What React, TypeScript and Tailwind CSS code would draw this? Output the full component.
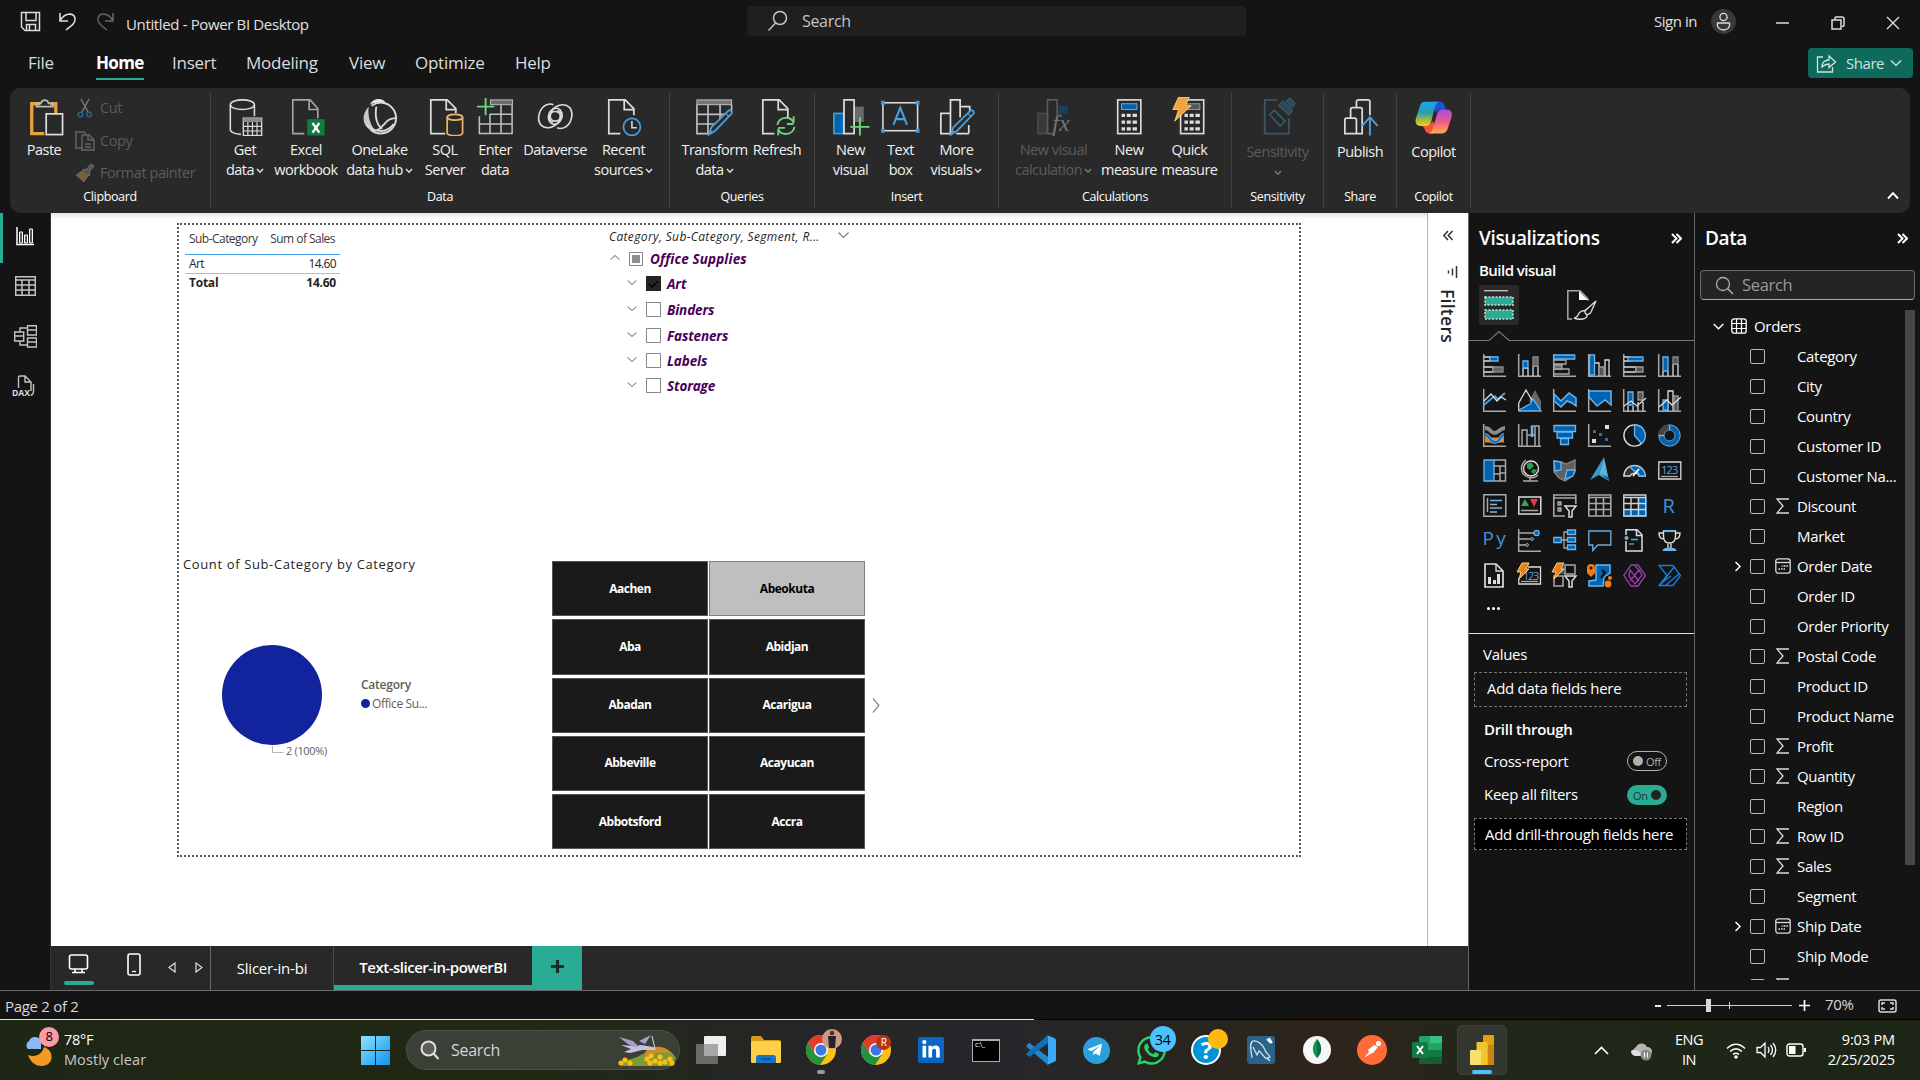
import React from "react";
import { FaLinkedinIn, FaTelegramPlane, FaWhatsapp } from "react-icons/fa";

type Kids = { children?: React.ReactNode };

const G = "#a8a8a8";
const W = "#dcdcdc";
const B = "#0063b1";
const L = "#6cb4ea";

function P({ d, s = W, f = "none", w = 1.3 }: { d: string; s?: string; f?: string; w?: number }) {
  return <path d={d} stroke={s} fill={f} strokeWidth={w} />;
}

function Svg({ s = 24, h, vb, children }: Kids & { s?: number; h?: number; vb?: string }) {
  return (
    <svg width={s} height={h ?? s} viewBox={vb ?? `0 0 ${s} ${h ?? s}`} fill="none" className="block shrink-0">
      {children}
    </svg>
  );
}

function Caret({ dim }: { dim?: boolean }) {
  return (
    <svg width="8" height="6" viewBox="0 0 8 6" fill="none" className="ml-[2px] inline-block align-middle">
      <path d="M1 1l3 3.2L7 1" stroke={dim ? "#777" : "#e0e0e0"} strokeWidth="1.5" />
    </svg>
  );
}

/* ---------- Ribbon ---------- */

const pencil = (
  <>
    <path d="M34.5 14.5c2-2 5 1 3.2 3L21 35l-6.5 4 2.500-7.500z" fill="#2b2b2b" stroke="#4a9edb" strokeWidth="1.8" />
    <path d="M14.500 39l1.500-5 3.500 3z" fill="#4a9edb" />
    <path d="M32 17l3.500 3.500" stroke="#4a9edb" strokeWidth="1.3" />
  </>
);

const icons: Record<string, React.ReactNode> = {
  paste: (
    <>
      <P d="M16 7H7v31h13M26 7h6v10" s="#e8a33d" w={3.4} />
      <P d="M12 10V6.500h4.500c1-4.500 7-4.500 8 0H29V10z" s="#b8b8b8" w={1.8} />
      <rect x="22" y="17.500" width="17" height="21.500" fill="#292929" stroke={W} strokeWidth="1.8" />
    </>
  ),
  getdata: (
    <>
      <ellipse cx="17" cy="8" rx="12.500" ry="5" stroke={W} strokeWidth="1.600" />
      <P d="M4.500 8v26c0 2.500 5 4.500 11 4.800M29.500 8v12" w={1.6} />
      <rect x="18" y="22" width="19" height="18" fill="#292929" stroke={W} strokeWidth="1.400" />
      <rect x="18" y="22" width="19" height="4" fill="#8a8a8a" />
      <P d="M18 30.500h19M18 35.300h19M22.700 26v14M27.500 26v14M32.200 26v14" w={1.2} />
    </>
  ),
  excel: (
    <>
      <P d="M18 38H6V3h18l8 9v10M23 3v10h9" s="#a6a6a6" w={1.700} />
      <rect x="21" y="23" width="18" height="17" fill="#107c41" />
      <P d="M26.500 27l7 10M33.500 27l-7 10" s="#fff" w={2.4} />
    </>
  ),
  onelake: (
    <>
      <path d="M10 8C14 0 25 0 28 8c-6-3-12-3-18 0z" fill="#e8e8e8" />
      <path d="M9 10C-1 20 4 35 17 36c-7-7-9-17-8-26z" fill="#c9c9c9" />
      <path d="M12 9a16 16 0 1 1-1 25" stroke={W} strokeWidth="1.900" />
      <P d="M17 10c-2 11 1 20 6 23M17 35c9-4 9-13 20-13M7 29c6 7 20 10 28-1" w={1.900} />
    </>
  ),
  sql: (
    <>
      <P d="M20 38H5V3h17l9 9v5M21 3v10h10" w={1.800} />
      <rect x="22" y="18" width="16" height="22" fill="#292929" />
      <ellipse cx="30" cy="21" rx="8" ry="3" stroke="#edb36b" strokeWidth="1.8" />
      <P d="M22 21v16c0 4 16 4 16 0V21" s="#edb36b" w={1.8} />
    </>
  ),
  enter: (
    <>
      <rect x="15" y="3" width="23" height="5" fill="#6d6d6d" stroke="#bbb" />
      <P d="M3.500 20v18h34V8M3.500 28h34M14 18h24M14.500 18v20M26 8v30M18 13" s="#c0c0c0" w={1.600} />
      <P d="M1 10h18M10 1v18" s="#6fd37f" w={2} />
    </>
  ),
  dataverse: (
    <>
      <ellipse cx="20" cy="20" rx="7" ry="8.500" transform="rotate(20 20 20)" stroke={W} strokeWidth="1.700" />
      <P d="M18 26c-6-1-5-11 2-11 4 0 6 3 5 7-2 9-14 13-20 7-5-7-1-18 6-21 3-1 5-1 7 0" w={1.700} />
      <P d="M22 14c6 1 5 11-2 11-4 0-6-3-5-7 2-9 14-13 20-7 5 7 1 18-6 21-3 1-5 1-7 0" w={1.700} />
    </>
  ),
  recent: (
    <>
      <P d="M17 38H5V3h17l9 9v7M21 3v10h10" w={1.800} />
      <circle cx="29" cy="31" r="8.800" fill="#292929" stroke="#4a9edb" strokeWidth="1.800" />
      <P d="M29 25v7h5" w={1.600} />
    </>
  ),
  transform: (
    <>
      <rect x="2" y="3" width="36" height="5" fill="#777" stroke="#c0c0c0" />
      <P d="M2 8v30h13M38 8v7M2 18h34M2 28h22M13.500 8v30M26 8v19" s="#c0c0c0" w={1.700} />
      {pencil}
    </>
  ),
  refresh: (
    <>
      <P d="M17 38H5V3h17l9 9v9M21 3v10h10" w={1.800} />
      <P d="M20 29c2-9 14-10 17-2v-7m0 8h-7M38 31c-2 9-14 10-17 2v7m0-8h7" s="#6fd37f" w={1.900} />
    </>
  ),
  newvisual: (
    <>
      <rect x="3" y="17" width="10" height="21" fill={B} stroke="#4a9edb" strokeWidth="1.600" />
      <rect x="13.500" y="3" width="10.500" height="35" stroke={W} strokeWidth="1.800" />
      <rect x="25" y="10" width="9" height="16" fill="#6b6b6b" />
      <P d="M20 31h20M30 21v19" s="#6fd37f" w={2} />
    </>
  ),
  textbox: (
    <>
      <rect x="2" y="6" width="36" height="29" stroke={W} strokeWidth="1.600" />
      <P d="M0 4h4v4H0zM36 4h4v4h-4zM0 33h4v4H0zM36 33h4v4h-4z" s="none" f="#3b9be8" />
      <P d="M13 29l7-18 7 18M15.500 23h9" s="#4a9edb" w={2.200} />
    </>
  ),
  morevisuals: (
    <>
      <P d="M16 38H4V17h10M14 38V3h10v18M25 10h9v6M33 38v-9M20 38h13" w={1.800} />
      {pencil}
    </>
  ),
  viscalc: (
    <>
      <rect x="4" y="17" width="10" height="21" fill="#3d3d3d" stroke="#555" strokeWidth="1.600" />
      <P d="M14 38V3h10v22M14 38h6" s="#666" w={1.700} />
      <rect x="25" y="9" width="10" height="9" fill="#1b4461" />
      <text x="19" y="35" fontSize="25" fontStyle="italic" fill="#888" fontFamily="Liberation Serif">fx</text>
    </>
  ),
  measure: (
    <>
      <rect x="8" y="3" width="24" height="35" stroke={W} strokeWidth="1.700" />
      <rect x="12" y="7" width="16" height="6" fill={B} stroke="#62b0e8" />
      <P d="M12 19h16M12 26h16M12 33h16" s={W} w={3.4} />
      <P d="M16.500 16v20M22.500 16v20" s="#292929" w={1.800} />
    </>
  ),
  quick: (
    <>
      <rect x="11" y="3" width="24" height="35" stroke={W} strokeWidth="1.700" />
      <rect x="18" y="7" width="13" height="6" fill="#555" stroke="#999" />
      <P d="M15 19h16M15 26h16M15 33h16" s={W} w={3.400} />
      <P d="M19.500 16v20M25.500 16v20" s="#292929" w={1.800} />
      <path d="M9 0h11l-4 9h6L5 25l4-12H3z" fill="#f2a43c" stroke="#ffd27a" />
    </>
  ),
  sensitivity: (
    <>
      <P d="M20 3H7v35h25V22" s="#3d627a" w={1.900} />
      <P d="M12 18l5-4 11 11-5 5z" s="#3d627a" w={1.800} />
      <path d="M21 9l5-5 10 10-4 5zM29 4l4-3 6 6-4 4z" fill="#2d5069" stroke="#4a718c" />
    </>
  ),
  publish: (
    <>
      <path d="M4 38V24c0-1.500 1-2 2-2h8c1 0 2 .5 2 2v14zM10 22v-9c0-1.500 1-2 2-2h8c1.500 0 2 1 2 2v25H16M16 11V5c0-1.500 1-2 2-2h10c1.500 0 2 1 2 2v14" stroke={W} strokeWidth="1.800" />
      <P d="M30 40V21m-8 9l8-9 8 9" s="#4a9edb" w={2} />
    </>
  ),
  copilot: (
    <>
      <defs>
        <linearGradient id="cpa" x1="0" y1="0" x2="0" y2="1"><stop stopColor="#1ba5f5" /><stop offset=".45" stopColor="#2b9fa8" /><stop offset="1" stopColor="#ffd000" /></linearGradient>
        <linearGradient id="cpb" x1="0" y1="0" x2="0" y2="1"><stop stopColor="#a34fe8" /><stop offset=".5" stopColor="#f0588a" /><stop offset="1" stopColor="#ffae4a" /></linearGradient>
      </defs>
      <path d="M17 5h10c3 0 4 2 5 4l1 4h-5c-3 0-4 1-5 4z" fill="#1f52d6" />
      <path d="M8 29h5c3 0 5-1 6-4l4 6-2 7h-3c-4 0-6-1-7-5z" fill="#f2523c" />
      <path d="M12 5h14c-3 1-4 4-5 8l-3 12c-1 3-2 5-5 5H7c-5 0-6-4-5-8l4-12c1-3 2-5 6-5z" fill="url(#cpa)" />
      <path d="M28 38H15c4-1 4-4 5-7l4-13c1-3 2-5 5-5h5c5 0 6 4 5 8l-4 12c-1 3-3 5-7 5z" fill="url(#cpb)" />
    </>
  ),
};

function RBtn({ icon, w, lines, caret, dim, low }: { icon: string; w: string; lines: string[]; caret?: boolean; dim?: boolean; low?: boolean }) {
  return (
    <div className={`flex flex-col items-center ${w} ${dim ? "text-[#5c5c5c]" : "text-[#f0f0f0]"}`}>
      <div className={dim ? "opacity-80" : ""}>
        <Svg s={39} vb="0 0 40.500 40.500">{icons[icon]}</Svg>
      </div>
      <div className={`text-center text-[14.5px] leading-[20px] tracking-[-0.035em] whitespace-nowrap ${low ? "mt-[6px]" : "mt-1"}`}>
        {lines.map((l, i) => (
          <div key={i} className="-mx-4 h-5">
            {l}
            {caret && i === lines.length - 1 && <Caret dim={dim} />}
          </div>
        ))}
      </div>
    </div>
  );
}

function Group({ w, label, children }: Kids & { w: string; label: string }) {
  return (
    <div className={`relative my-[5px] flex flex-col border-r border-[#404040] pt-[4px] ${w}`}>
      <div className="flex h-[89px] justify-center">{children}</div>
      <div className="h-[22px] text-center text-[12.5px] leading-[21px] tracking-[-0.03em] text-white">{label}</div>
    </div>
  );
}

function Ribbon() {
  return (
    <div className="ml-[10px] flex h-[125px] w-[1900px] rounded-[10px] bg-[#292929]">
      <Group w="w-[201px]" label="Clipboard">
        <div className="flex w-full">
          <RBtn icon="paste" w="w-[52px] ml-[8px]" lines={["Paste"]} />
          <div className="ml-[5px] flex flex-col text-[14.5px] tracking-[-0.03em] text-[#5c5c5c]">
            <div className="-mt-[5px] flex h-[32px] shrink-0 items-center gap-[5px]">
              <Svg s={20}><P d="M6 1l7 13M14 1L7 14" s="#777" w={1.500} /><circle cx="5.500" cy="16.500" r="2.300" stroke="#35607e" strokeWidth="1.500" /><circle cx="14" cy="16.500" r="2.300" stroke="#35607e" strokeWidth="1.500" /></Svg>
              Cut
            </div>
            <div className="flex h-[33px] shrink-0 items-center gap-[5px]">
              <Svg s={20}><P d="M7 17H1V1h8l2 2M7 4h7l5 5v10H7zM13 4v5h6M10 13h6M10 16h6" s="#666" w={1.400} /></Svg>
              Copy
            </div>
            <div className="flex h-[32px] shrink-0 items-center gap-[5px]">
              <Svg s={20}><path d="M11 7l5-6 3 2-5 6 1 3-3 1-5-5 2-2z" fill="#555" stroke="#777" /><path d="M7 8l6 5-4 6-8-7z" fill="#7a6037" stroke="#666" /></Svg>
              Format painter
            </div>
          </div>
        </div>
      </Group>
      <Group w="w-[459px]" label="Data">
        <RBtn icon="getdata" w="w-[54px]" lines={["Get", "data"]} caret />
        <RBtn icon="excel" w="w-[68px]" lines={["Excel", "workbook"]} />
        <RBtn icon="onelake" w="w-[79px]" lines={["OneLake", "data hub"]} caret />
        <RBtn icon="sql" w="w-[52px]" lines={["SQL", "Server"]} />
        <RBtn icon="enter" w="w-[48px]" lines={["Enter", "data"]} />
        <RBtn icon="dataverse" w="w-[72px]" lines={["Dataverse"]} />
        <RBtn icon="recent" w="w-[65px]" lines={["Recent", "sources"]} caret />
        <div className="w-[6px]" />
      </Group>
      <Group w="w-[145px]" label="Queries">
        <RBtn icon="transform" w="w-[70px]" lines={["Transform", "data"]} caret />
        <RBtn icon="refresh" w="w-[55px]" lines={["Refresh"]} />
      </Group>
      <Group w="w-[184px]" label="Insert">
        <RBtn icon="newvisual" w="w-[50px]" lines={["New", "visual"]} />
        <RBtn icon="textbox" w="w-[50px]" lines={["Text", "box"]} />
        <RBtn icon="morevisuals" w="w-[62px]" lines={["More", "visuals"]} caret />
      </Group>
      <Group w="w-[233px]" label="Calculations">
        <RBtn icon="viscalc" w="w-[92px]" lines={["New visual", "calculation"]} caret dim />
        <RBtn icon="measure" w="w-[59px]" lines={["New", "measure"]} />
        <RBtn icon="quick" w="w-[62px]" lines={["Quick", "measure"]} />
        <div className="w-[2px]" />
      </Group>
      <Group w="w-[92px]" label="Sensitivity">
        <RBtn icon="sensitivity" w="w-[90px]" lines={["Sensitivity", ""]} caret dim low />
      </Group>
      <Group w="w-[73px]" label="Share">
        <RBtn icon="publish" w="w-[70px]" lines={["Publish"]} low />
      </Group>
      <Group w="w-[74px]" label="Copilot">
        <RBtn icon="copilot" w="w-[70px]" lines={["Copilot"]} low />
      </Group>
      <div className="flex flex-1 items-end justify-end pr-[11px] pb-[13px]">
        <Svg s={12} h={9}><P d="M1 7.500L6 2.200l5 5.300" s="#fff" w={1.900} /></Svg>
      </div>
    </div>
  );
}

function TitleBar() {
  return (
    <div className="flex h-[42px] items-center text-[15px] tracking-[-0.03em] text-[#e0e0e0]">
      <div className="flex w-[747px] items-center">
        <div className="ml-[20px]">
          <Svg s={21}><path d="M1.500 1.500h18v18H5l-3.500-3.500zM6 1.500v8h10v-8M6.500 19.500v-6h9v6M9.500 14v5" stroke={W} strokeWidth="1.500" /></Svg>
        </div>
        <div className="ml-[17px]">
          <Svg s={20}><P d="M2 2v8h8M2 10C6 2 15 1 17 7c1 5-4 8-9 12" w={1.600} /></Svg>
        </div>
        <div className="ml-[18px]">
          <Svg s={20}><P d="M17 2v8H9M17 10C13 2 4 1 2 7c-1 5 4 8 9 12" s="#666" w={1.500} /></Svg>
        </div>
        <div className="mt-[7px] ml-[10px] tracking-[-0.024em]">Untitled - Power BI Desktop</div>
      </div>
      <div className="flex h-[30px] w-[499px] items-center rounded-[3px] bg-[#1f1f1f] pl-[20px] text-[16px] tracking-[-0.02em] text-[#c4c4c4]">
        <Svg s={22}><circle cx="13" cy="8" r="6.500" stroke="#c4c4c4" strokeWidth="1.500" /><P d="M8.500 13L1.500 20.500" s="#c4c4c4" w={1.500} /></Svg>
        <span className="ml-[13px]">Search</span>
      </div>
      <div className="ml-[408px] w-[44px] whitespace-nowrap">Sign in</div>
      <div className="ml-[13px] flex h-[25px] w-[25px] items-center justify-center rounded-full bg-[#383838]">
        <Svg s={19}><circle cx="9.500" cy="5" r="3.600" stroke={W} strokeWidth="1.300" /><P d="M3.500 11h12c1 5-3 7-6 7s-7-2-6-7z" w={1.300} /></Svg>
      </div>
      <div className="mt-[3px] ml-[40px]"><Svg s={14}><P d="M0 7h13" w={1.500} /></Svg></div>
      <div className="mt-[3px] ml-[41px]"><Svg s={14}><P d="M1 4h9v9H1zM4 3.500V2q0-1 1-1h6q2 0 2 2v6q0 1.500-2 1.500" w={1.500} /></Svg></div>
      <div className="mt-[3px] ml-[41px]"><Svg s={14}><P d="M1 1l12 12M13 1L1 13" w={1.400} /></Svg></div>
    </div>
  );
}

function Menu() {
  return (
    <div className="flex h-[46px] text-[17px] tracking-[-0.015em] text-[#dcdcdc]">
      <div className="mt-[9px] ml-[28px] w-[68px] leading-6">File</div>
      <div className="flex w-[76px] flex-col">
        <div className="mt-[9px] font-bold leading-6 tracking-[-0.04em] text-white">Home</div>
        <div className="mt-[3px] h-[2px] w-[48px] bg-[#2aac94]" />
      </div>
      <div className="mt-[9px] w-[74px] leading-6">Insert</div>
      <div className="mt-[9px] w-[103px] leading-6">Modeling</div>
      <div className="mt-[9px] w-[66px] leading-6">View</div>
      <div className="mt-[9px] w-[100px] leading-6">Optimize</div>
      <div className="mt-[9px] leading-6">Help</div>
      <div className="mt-[6px] mr-[7px] ml-auto flex h-[30px] w-[105px] items-center rounded-[4px] bg-[#0e6b5b] pl-[8px] text-[15px] tracking-[-0.03em] text-[#cfe3df]">
        <Svg s={21}><P d="M7 4H1.500v15h15v-5M6 14c0-5 3-7 7-7V3l6.500 6L13 14.500V11c-3 0-5 1-7 3z" s="#cfe3df" w={1.300} /></Svg>
        <span className="ml-[9px]">Share</span>
        <span className="ml-[6px]"><Svg s={12}><P d="M1 3.500l5 5 5-5" s="#cfe3df" /></Svg></span>
      </div>
    </div>
  );
}

/* ---------- Left rail ---------- */

function Rail() {
  return (
    <div className="flex w-[51px] flex-col border-r border-[#333] bg-[#141414]">
      <div className="flex h-[50px] items-center border-l-3 border-[#2aac94] pb-[2px] pl-[13px]">
        <Svg s={20}><P d="M1 0v17.500h17" s="#fff" w={1.500} /><path d="M3.500 16V5h3v11zM8.500 16V8h3v8zM13.500 16V2h3v14z" fill="#555" stroke="#fff" /></Svg>
      </div>
      <div className="-mt-[2px] flex h-[50px] items-center pl-[15px]">
        <Svg s={21} h={20}><P d="M.7.7h19.600v18.500H.7zM.7 4h19.600M.7 9h19.600M.7 14h19.600M7 4v15M14 4v15" s="#c4c4c4" w={1.500} /></Svg>
      </div>
      <div className="flex h-[50px] items-center pl-[14px]">
        <Svg s={23}><P d="M.7 7h9v9h-9zM.7 11h9M13.500.7h9V10h-9zM13.500 5h9M13.500 13h9v9h-9zM13.500 17h9M6 7V3h7M6 16v4h7" s="#c4c4c4" w={1.400} /></Svg>
      </div>
      <div className="flex h-[50px] items-center pl-[12px]">
        <Svg s={24} h={22}>
          <P d="M6.500 13V2.500q0-1.500 1.500-1.500h5l6 6v9M13 1v6h6M21.500 9v7q0 4-3 4" s="#c4c4c4" w={1.400} />
          <text x="0" y="21" fontSize="8.500" fontWeight="700" fill="#dcdcdc" fontFamily="Open Sans">DAX</text>
        </Svg>
      </div>
    </div>
  );
}

/* ---------- Report canvas ---------- */

const cities = ["Aachen", "Abeokuta", "Aba", "Abidjan", "Abadan", "Acarigua", "Abbeville", "Acayucan", "Abbotsford", "Accra"];

const slicerRows = [
  { name: "Art", on: true, h: "h-[25px]" },
  { name: "Binders", h: "h-[26px]" },
  { name: "Fasteners", h: "h-[26px]" },
  { name: "Labels", h: "h-[25px]" },
  { name: "Storage", h: "h-[25px]" },
];

function Canvas() {
  return (
    <div className="relative w-[1376px] bg-gradient-to-b from-[#e4e4e4] via-white via-[6px] to-white">
      <div className="absolute top-[10px] left-[126px] h-[634px] w-[1124px] border-2 border-dotted border-[#555]" />

      <div className="absolute top-[15px] left-[134px] w-[155px] text-[12px] tracking-[-0.02em] text-[#252423]">
        <div className="flex h-[27px] justify-between border-b border-[#41a5ee] pt-[2px] pr-[5px] pl-1 leading-[18px] tracking-[-0.045em] text-[#3a3938]">
          <span>Sub-Category</span><span>Sum of Sales</span>
        </div>
        <div className="flex h-[19px] justify-between border-b border-[#8cc6f3] pr-[4px] pl-1 leading-[18px] tracking-[-0.05em]">
          <span>Art</span><span>14.60</span>
        </div>
        <div className="flex h-[19px] justify-between pr-[4px] pl-1 font-bold leading-[18px]">
          <span>Total</span><span>14.60</span>
        </div>
      </div>

      <div className="absolute top-[14px] left-[558px] w-[260px]">
        <div className="flex h-[19px] items-center justify-between pr-[20px] text-[12px] italic tracking-[0.03em] whitespace-nowrap text-[#252423]">
          <span>Category, Sub-Category, Segment, R...</span>
          <span className="-mt-[4px]"><Svg s={11}><P d="M.5 3.500l5 5 5-5" s="#777" w={1.100} /></Svg></span>
        </div>
        <div className="flex h-[26px] items-center text-[13.5px] font-bold italic tracking-[0.01em] whitespace-nowrap text-[#4a0058]">
          <span className="-mt-[3px] ml-px"><Svg s={10}><P d="M.5 6.500L5 2.500l4.500 4" s="#999" w={1.100} /></Svg></span>
          <div className="mr-[7px] ml-[9px] flex h-[14px] w-[14px] items-center justify-center border border-[#8a8a8a]">
            <div className="h-2 w-2 bg-[#8f8f8f]" />
          </div>
          Office Supplies
        </div>
        {slicerRows.map((r) => (
          <div key={r.name} className={`flex items-center pl-[18px] text-[13.5px] font-bold italic tracking-[-0.01em] text-[#4a0058] ${r.h}`}>
            <span className="-mt-[3px]"><Svg s={10}><P d="M.5 2.500l4.500 4 4.500-4" s="#999" w={1.100} /></Svg></span>
            <div className={`-mt-[2px] mr-[6px] ml-[9px] flex h-[15px] w-[15px] items-center justify-center border ${r.on ? "border-[#252423] bg-[#252423]" : "border-[#8a8a8a]"}`}>
              {r.on && <Svg s={11}><P d="M1 6l3 3 6-6" s="#000" w={1.300} /></Svg>}
            </div>
            {r.name}
          </div>
        ))}
      </div>

      <div className="absolute top-[341px] left-[132px] text-[13px] leading-5 tracking-[0.048em] whitespace-nowrap text-[#252423]">
        Count of Sub-Category by Category
      </div>
      <div className="absolute top-[432px] left-[171px]">
        <Svg s={110} h={120}>
          <circle cx="50" cy="50" r="50" fill="#12239e" />
          <P d="M50.500 101v6.500h11" s="#b5b5b5" w={1} />
        </Svg>
      </div>
      <div className="absolute top-[530px] left-[235px] text-[11px] leading-4 tracking-[-0.03em] text-[#605e5c]">2 (100%)</div>
      <div className="absolute top-[463px] left-[310px] text-[12px] tracking-[-0.03em] text-[#605e5c]">
        <div className="h-[19px] font-semibold leading-[18px] tracking-[-0.02em]">Category</div>
        <div className="flex h-[18px] items-center gap-[2px]">
          <div className="-mt-[2px] h-[9px] w-[9px] rounded-full bg-[#12239e]" />
          Office Su...
        </div>
      </div>

      <div className="absolute top-[348px] left-[501px] grid w-[313px] grid-cols-2 gap-x-px gap-y-[3px]">
        {cities.map((c) => (
          <div
            key={c}
            className={`flex h-[55.250px] items-center justify-center border text-[12px] font-bold tracking-[-0.04em] ${c === "Abeokuta" ? "border-[#808080] bg-[#bfbfbf] text-black" : "border-[#555] bg-[#1a1a1a] text-white"}`}
          >
            {c}
          </div>
        ))}
      </div>
      <div className="absolute top-[485px] left-[821px]">
        <Svg s={9} h={15}><P d="M1 .5l6 7-6 7" s="#888" w={1.200} /></Svg>
      </div>
    </div>
  );
}

function PageTabs() {
  return (
    <div className="flex h-[44px] bg-[#282828] text-[15px] tracking-[-0.015em] text-white">
      <div className="flex w-[160px] border-r border-[#6a6a6a] pt-[7px]">
        <div className="ml-[13px] flex w-[30px] flex-col items-center">
          <div className="-ml-[2px]"><Svg s={21}><rect x="1.500" y="2" width="18" height="14" rx="2" stroke="#fff" strokeWidth="1.600" /><P d="M7 16v3m7-3v3M4 19.500h13" s="#fff" w={1.600} /></Svg></div>
          <div className="mt-[7px] h-[4px] w-[30px] rounded-sm bg-[#2aac94]" />
        </div>
        <div className="ml-[33px]"><Svg s={14} h={23}><rect x="1" y="1" width="12" height="21" rx="2" stroke="#fff" strokeWidth="1.600" /><P d="M5 18.500h4" s="#fff" /></Svg></div>
        <div className="mt-[9px] ml-[27px]"><Svg s={8} h={11}><P d="M7 1v9L1 5.500z" w={1.200} /></Svg></div>
        <div className="mt-[9px] ml-[19px]"><Svg s={8} h={11}><P d="M1 1v9l6-4.500z" w={1.200} /></Svg></div>
      </div>
      <div className="flex w-[123px] items-center justify-center border-r border-[#4a4a4a]">Slicer-in-bi</div>
      <div className="flex w-[199px] items-center justify-center border-r border-b-5 border-[#2aac94] pt-[4px] font-semibold tracking-[-0.032em]">Text-slicer-in-powerBI</div>
      <div className="flex w-[49px] items-center justify-center bg-[#2aac94] pb-1">
        <Svg s={13}><P d="M6.500 0v13M0 6.500h13" s="#1d2a28" w={3.2} /></Svg>
      </div>
    </div>
  );
}

function Dbl({ dir, c = "#fff" }: { dir: "l" | "r"; c?: string }) {
  return (
    <Svg s={11}>
      <P d={dir === "r" ? "M1 1l4.500 4.500L1 10M5.500 1L10 5.500 5.500 10" : "M5 1L.8 5.500 5 10M9.500 1L5.300 5.500 9.500 10"} s={c} w={dir === "r" ? 2 : 1.500} />
    </Svg>
  );
}

function Filters() {
  return (
    <div className="flex w-[41px] flex-col items-center border-l border-[#b5b5b5] bg-white pt-[17px]">
      <Dbl dir="l" c="#333" />
      <div className="mt-[25px] ml-[7px]"><Svg s={12}><P d="M10.500 0v12M6.500 2.500v7M2.500 4.500v3" s="#333" w={1.500} /></Svg></div>
      <div className="mt-[11px] text-[17.5px] font-semibold leading-6 tracking-[0.015em] text-[#252423] [writing-mode:vertical-rl]">Filters</div>
    </div>
  );
}

/* ---------- Visualizations ---------- */

const axis = <P d="M.7 0v22.300H23" s={G} w={1.500} />;
const bolt = <path d="M4-1h7L8 5h3L1 15l2-7H-1z" fill="#e8801a" stroke="#ffcf80" strokeWidth="1" />;

const visuals: React.ReactNode[] = [
  <>{axis}<P d="M1 3h6v4H1M1 13h9v5H1" s={W} /><P d="M7 3h8v4H7z" s={L} f={B} /><P d="M10 13h10v5H10z" s="#888" f="#666" /></>,
  <>{axis}<P d="M5 14v8M10 14v8M15 12v10M20 12v10M5 14h5M15 12h5" s={W} /><P d="M5 7h5v7H5z" s={L} f={B} /><P d="M15 3h5v9h-5z" s="#888" f="#666" /></>,
  <>{axis}<P d="M1 6h12v4H1M1 15h15v5H1" s={G} /><P d="M1 11h8v4H1z" s={G} f="#666" /><P d="M.7 1h21v4H.7z" s={L} f={B} /></>,
  <>{axis}<P d="M7 9h4v13M17 22V6h4v16" s={W} /><P d="M11 13h5v9h-5z" s="#999" f="#555" /><P d="M1.500 1h5v20h-5z" s={L} f={B} /></>,
  <>{axis}<P d="M1 3h5v4H1M1 13h12v5H1" s={W} /><P d="M5 3h15v4H5z" s={L} f={B} /><P d="M13 13h7v5h-7z" s="#999" f="#555" /></>,
  <>{axis}<P d="M5 17v5M10 17v5M15 10v12M20 10v12M15 10h5" s={W} /><P d="M5 3h5v14H5z" s={L} f={B} /><P d="M15 3h5v7h-5z" s="#888" f="#555" /></>,

  <>{axis}<P d="M1 16L8 10l4-3 3 3 7-6" s="#4ba3e3" w={1.700} /><P d="M1 12l7-7 6 7 4-4 5 3" s={W} w={1.400} /></>,
  <><path d="M11 12l6-11 6 11v10z" fill="#666" /><P d="M.7 14L8 1l7 12M.7 14v8" s={W} /><P d="M1 21l11-6 3-5 8 12H1z" s={L} f={B} /></>,
  <>{axis}<P d="M1 5l7 7 8-8 7 5v8l-4-3-5-2-6 6-7-6z" s={L} f={B} w={1.500} /></>,
  <>{axis}<P d="M1 2h22v14l-6-5-8 6-8-9z" s={L} f={B} w={1.500} /></>,
  <>{axis}<P d="M15 3h5v8h-5z" s="#999" f="#555" /><P d="M5 3h5v13H5z" s={L} f={B} /><P d="M5 22v-5M10 22v-5M15 22v-9M20 22v-9M1 17l7-5 6 5 9-8" s={W} /></>,
  <>{axis}<P d="M10 22V2h5v20" s={W} /><P d="M16 7h4v15h-4z" s="#999" f="#555" /><P d="M5 11h5v10H5z" s={L} f={B} /><P d="M1 18l8-7 5 5 9-8" s={W} /></>,

  <>{axis}<P d="M2 16h19" s="#ef7d16" w={5} /><P d="M2 12.500h4M17 12.500h4" s="#ffb46b" w={1.500} /><P d="M2 4c6 0 5 5 9.500 5S17 4 22 4" s="#8a8a8a" w={4} /><P d="M2 11c5 0 4 7 10 7s5-7 9-7" s={L} w={3.500} /><P d="M2 11c5 0 4 7 10 7s5-7 9-7" s={B} w={1.500} /></>,
  <>{axis}<P d="M4 22V6h5v5h5V2h7v20M9 11v11M14 11h3M17 2v20" s={G} w={1.500} /><P d="M14 2v11" s={L} w={2.600} /></>,
  <><P d="M1 1.500h21.500v6H1zM4 8h15.500v6H4zM7.500 14.500h8v6h-8z" s={L} f={B} /></>,
  <>{axis}<P d="M5 6h3v3H5zM11 9h3v3h-3zM17 14h3v3h-3z" s="none" f="#1a73c2" /><P d="M17 1h4v4h-4zM4 15h4v4H4z" s="none" f={W} /></>,
  <><circle cx="11.500" cy="11.500" r="10.600" stroke={W} strokeWidth="1.400" /><P d="M11.500 1a10.500 10.500 0 0 1 7 18.500l-7-8z" s={L} f={B} /></>,
  <><circle cx="11.500" cy="11.500" r="8.300" stroke={B} strokeWidth="4.400" /><circle cx="11.500" cy="11.500" r="10.700" stroke={L} /><circle cx="11.500" cy="11.500" r="5.500" stroke={L} /><P d="M3 11.500a8.500 8.500 0 0 1 8.500-8.500" s="#444" w={5} /><P d="M.8 11.500h5.200M11.500 1v5" s={G} /></>,

  <><P d="M1 1h10v21H1z" s={L} f={B} /><P d="M11 1h11.500v21H11M11 7h11M17 7v15M11 15h6M17 14h6" s={G} w={1.500} /></>,
  <><circle cx="13" cy="9.500" r="7.500" stroke={W} fill="#111" strokeWidth="1.400" /><path d="M9 5l4-2 3 4-4 4-3-2zM15 10l4 1-3 4-3-2z" fill="#2d9a4a" /><P d="M8 1C2 5 2 14 8 17c4 3 9 2 12-1M12 18v4M5 22h15" s={G} w={1.500} /></>,
  <><P d="M1 2l7 1 5 2 9-4v12l-4 5-6 4-6-3-5-6z" s="#888" f="#606060" /><P d="M1 2l7 1v8l-6 1zM14 11h8l-2 6-8 3z" s={L} f={B} /></>,
  <><path d="M16-2L2 21l9-5z" fill="#3a9bc8" /><path d="M16-2l5 24-10-6z" fill="#57b6dc" /><path d="M13 15l7 3 1 4z" fill="#0063b1" /></>,
  <><P d="M.8 17a10.700 10.700 0 0 1 21.400 0h-6a5 5 0 0 0-9 0z" s={W} f="#333" /><P d="M7 8a10.700 10.700 0 0 1 15.200 9h-6a5 5 0 0 0-5-5z" s={L} f={B} /><P d="M10 17l6-7" s="#fff" w={1.800} /></>,
  <><P d="M.8 3h22v17h-22z" s={W} /><text x="3" y="15" fontSize="11.500" fill="#4ba3e3" fontFamily="Open Sans" textLength="17">123</text><P d="M3 17.500h17" s={G} /></>,

  <><P d="M.8.8h22v21.500h-22z" s={G} w={1.500} /><P d="M4.500 4v14M7 10.500h7M7 18h7" s={G} w={1.500} /><P d="M7 6.500h12M7 14h12" s={L} w={1.700} /></>,
  <><P d="M.8 3h22v17h-22z" s={W} w={1.500} /><path d="M3 12l4-7 4 7z" fill="#3aa655" /><path d="M12 5h8l-4 8z" fill="#e33b3b" /><P d="M3 16.500h17" s={G} w={1.500} /></>,
  <><P d="M12 22H.8V1h22v9M.8 4h22" s={G} w={1.600} /><P d="M5 8h3v3H5zM5 14h3v3H5z" s={G} f="#777" /><P d="M12 12h11l-4 5v6h-3v-6z" s={W} f="#141414" w={1.500} /></>,
  <><P d="M.8 1h22v21h-22zM.8 3.500h22M.8 9.500h22M.8 15.500h22M8 4v18M15.500 4v18" s={G} w={1.600} /></>,
  <><P d="M15 4h8v18H1v-6h14z" s={B} f={B} /><P d="M.8 1h22v21h-22zM.8 3.500h22M.8 9.500h22M.8 15.500h22M8 4v18M15.500 4v18" s="#c9d6e0" w={1.400} /></>,
  <><text x="4.500" y="19" fontSize="20" fill="#3a96dd" fontFamily="Open Sans">R</text></>,

  <><text x="-.5" y="16" fontSize="19" fill="#3a96dd" fontFamily="Open Sans" textLength="23">Py</text></>,
  <>{axis}<P d="M1 4h15M1 10h11M1 16h7" s={G} w={1.400} /><circle cx="18.500" cy="4" r="2.600" fill={B} stroke={L} strokeWidth="1.300" /><circle cx="14" cy="10" r="1.400" stroke={G} /><circle cx="9" cy="16" r="1.400" stroke={G} /></>,
  <><P d="M8 11h3M15 3h-4v16h4M11 11h4" s={G} /><P d="M.8 8.500h7.500v5H.8zM14.500 1h8v4.500h-8zM14.500 8.500h8V13h-8zM14.500 16h8v4.500h-8z" s={L} f={B} /></>,
  <><P d="M.8 2h22v14h-13l-5 5.500V16H.8z" s="#69a9d8" w={1.400} /></>,
  <><P d="M3 6V.8h11l5 5V22H3V12M13.500 1v5.500H19" s={W} w={1.500} /><circle cx="3.500" cy="9" r="2" fill={L} /><P d="M8 10.500h7M13 15" s="#4ba3e3" w={1.600} /><P d="M6 15h5" s="#4ba3e3" /></>,
  <><P d="M5.500 2h12v5c0 5-3 7-6 7s-6-2-6-7zM5.500 4H1c0 5 3 6 5 6M17.500 4H22c0 5-3 6-5 6M10 14v5M13 14v5" s={W} w={1.400} /><P d="M6 2h11M6 21c1-2 10-2 11 0z" s={L} f={B} w={2} /></>,

  <><P d="M2 0h11l7 7v16H2z" s={W} w={1.700} /><P d="M13 0v7h7" s={W} /><path d="M5 13h3v7H5zM10 16h3v4h-3zM14 10h3v10h-3z" fill={W} /></>,
  <><P d="M10 3h12.500v17H.8v-6" s={W} /><text x="5" y="16" fontSize="11" fill="#4ba3e3" fontFamily="Open Sans" textLength="16">123</text><P d="M3 17.500h17" s={G} />{bolt}</>,
  <><P d="M12 1h10v9H12zM1 12h9v10H1z" s={G} w={1.500} /><P d="M12 12h11l-4 5v6h-3v-6z" s={W} f="#141414" w={1.500} /><path d="M7 2h4v8H7z" fill={B} />{bolt}</>,
  <><P d="M8 1h14v8l-6 4-1 9H1v-5l7-1z" s={L} f={B} w={1.500} /><P d="M14 6l3 3-4 5" s="#141414" w={2.500} /><path d="M-1 4a4 4 0 0 1 8 0v5l-4 4-4-4z" fill="#ef7d16" /><circle cx="3" cy="4" r="1.500" fill="#141414" /><circle cx="20" cy="20" r="3.400" fill="#ef7d16" /><circle cx="22" cy="14" r="2" fill="#ef7d16" /></>,
  <><P d="M8 1h7l7.500 10.500L15 22H8L.8 11.500zM7 6l4.500 5.500L16 6l3 5-7 9-6-8zM16 6l-4-4M7 17l4.500-5.500L16 17" s="#9b3fae" w={1.300} /></>,
  <><P d="M1 1.500h14l7.500 10L15 21.500H1l8-10zM8 21l13-11M3 20L16 3M1 21L13 12" s="#1a7fe0" w={1.300} /></>,
];

function Toggle({ on }: { on?: boolean }) {
  return on ? (
    <div className="flex h-5 w-10 items-center justify-between rounded-full bg-[#2aac94] pr-[6px] pl-[6px] text-[11px] leading-none text-[#1b3a35]">
      On<div className="h-[10px] w-[10px] rounded-full bg-[#252423]" />
    </div>
  ) : (
    <div className="flex h-5 w-10 items-center justify-between rounded-full border border-[#b0b0b0] pr-[5px] pl-[5px] text-[11px] leading-none text-[#b0b0b0]">
      <div className="h-[10px] w-[10px] rounded-full bg-[#b0b0b0]" />Off
    </div>
  );
}

function Visualizations() {
  return (
    <div className="flex w-[227px] flex-col border-x border-[#666] bg-[#141414] text-[15px] tracking-[-0.02em] text-white">
      <div className="flex h-[50px] items-center justify-between pr-[12px] pl-[10px]">
        <span className="text-[19px] font-semibold tracking-[-0.02em]">Visualizations</span>
        <Dbl dir="r" />
      </div>
      <div className="h-[22px] pl-[10px] text-[15px] font-semibold leading-[15px] tracking-[-0.035em]">Build visual</div>
      <div className="flex pl-[10px]">
        <div className="flex h-10 w-10 items-center justify-center rounded-[2px] bg-[#292929]">
          <Svg s={30}>
            <P d="M0 .7h24" s="#c8c8c8" w={1.300} />
            <rect x="1" y="7" width="28" height="8" fill="#2aac94" stroke="#d8d8d8" strokeWidth="1.500" strokeDasharray="2 1.500" />
            <rect x="1" y="20" width="28" height="9" fill="#2aac94" stroke="#d8d8d8" strokeWidth="1.500" strokeDasharray="2 1.500" />
          </Svg>
        </div>
        <div className="mt-[5px] ml-[48px]">
          <Svg s={30}>
            <P d="M5 29H.8V.8H13l8 8v2M13 1" s={G} w={1.500} />
            <path d="M12 1l9 9h-9z" fill="#fff" />
            <P d="M29 11l-9 8c-2 1-3 3-1 5 2 1 4 0 5-2zM19 21c-4-1-7 1-8 4-1 2-2 3-4 3 5 2 14 2 13-4" s={W} w={1.400} />
          </Svg>
        </div>
      </div>
      <div className="mt-[6px]">
        <Svg s={225} h={11}><P d="M0 9.500h20l10-9 10 9h185" s="#777" w={1.200} /></Svg>
      </div>
      <div className="mt-[12px] grid w-[224px] grid-cols-6 gap-y-[12px] pl-[14px]">
        {visuals.map((v, i) => (
          <div key={i} className="h-[23px] w-[23px]"><svg width="23" height="23" viewBox="0 0 23 23" fill="none" className="block overflow-visible">{v}</svg></div>
        ))}
      </div>
      <div className="mt-[20px] flex h-[3px] gap-[2px] pl-[18px]">
        <div className="h-[3px] w-[3px] rounded-full bg-white" />
        <div className="h-[3px] w-[3px] rounded-full bg-white" />
        <div className="h-[3px] w-[3px] rounded-full bg-white" />
      </div>
      <div className="mt-[23px] h-px bg-[#e0e0e0]" />
      <div className="mt-[10px] h-[28px] pl-[14px] leading-5">Values</div>
      <div className="mr-[7px] ml-[5px] flex h-[35px] items-center border border-dashed border-[#777] pb-[2px] pl-[12px]">Add data fields here</div>
      <div className="mt-[12px] h-[20px] pl-[15px] font-semibold leading-5">Drill through</div>
      <div className="mt-[6px] flex h-[32px] items-center justify-between pr-[27px] pl-[15px]">Cross-report<Toggle /></div>
      <div className="mt-[2px] flex h-[32px] items-center justify-between pr-[27px] pl-[15px]"><span className="-mt-px">Keep all filters</span><Toggle on /></div>
      <div className="mt-[7px] mr-[7px] ml-[5px] flex h-[32px] items-center border border-dashed border-[#777] bg-black pl-[10px] whitespace-nowrap">Add drill-through fields here</div>
    </div>
  );
}

/* ---------- Data pane ---------- */

type Field = { n: string; t?: "sum" | "date" };
const fields: Field[] = [
  { n: "Category" }, { n: "City" }, { n: "Country" }, { n: "Customer ID" }, { n: "Customer Na..." },
  { n: "Discount", t: "sum" }, { n: "Market" }, { n: "Order Date", t: "date" }, { n: "Order ID" }, { n: "Order Priority" },
  { n: "Postal Code", t: "sum" }, { n: "Product ID" }, { n: "Product Name" }, { n: "Profit", t: "sum" }, { n: "Quantity", t: "sum" },
  { n: "Region" }, { n: "Row ID", t: "sum" }, { n: "Sales", t: "sum" }, { n: "Segment" }, { n: "Ship Date", t: "date" },
  { n: "Ship Mode" }, { n: "", t: "sum" },
];

function DataPane() {
  return (
    <div className="flex w-[225px] flex-col bg-[#141414] text-[15px] tracking-[-0.022em] text-white">
      <div className="flex h-[50px] items-center justify-between pr-[12px] pl-[10px]">
        <span className="text-[19px] font-semibold tracking-[-0.02em]">Data</span>
        <Dbl dir="r" />
      </div>
      <div className="mt-[7px] ml-[5px] flex h-[30px] w-[215px] items-center rounded-[4px] border border-[#6a6a6a] border-b-[#a8a8a8] bg-[#242424] pl-[14px] text-[16px] text-[#9a9a9a]">
        <Svg s={19}><circle cx="8" cy="8" r="6.500" stroke="#b0b0b0" strokeWidth="1.300" /><P d="M12.500 12.500l5.500 5.500" s="#b0b0b0" w={1.400} /></Svg>
        <span className="ml-[8px] text-[16.5px]">Search</span>
      </div>
      <div className="mt-[10px] flex h-[670px]">
        <div className="w-[210px] overflow-hidden">
          <div className="mt-px flex h-[30px] items-center pl-[18px]">
            <Svg s={11}><P d="M.7 3l4.800 4.800L10.300 3" s="#fff" w={1.400} /></Svg>
            <span className="ml-[7px]"><Svg s={16}><rect x=".8" y=".8" width="14.400" height="14.400" rx="2.500" stroke="#fff" strokeWidth="1.300" /><P d="M5.500 1v14M10.500 1v14M1 5.500h14M1 10.500h14" s="#fff" w={1.200} /></Svg></span>
            <span className="ml-[7px]">Orders</span>
          </div>
          {fields.map((f, i) => (
            <div key={i} className="flex h-[30px] items-center whitespace-nowrap">
              <div className="flex w-[55px] justify-end pr-[8px]">
                {f.t === "date" && <Svg s={8} h={11}><P d="M1.500 1l4.500 4.500L1.500 10" s="#fff" w={1.500} /></Svg>}
              </div>
              <div className="h-[15px] w-[15px] rounded-[2px] border border-[#b8b8b8]" />
              <div className="ml-[10px] w-[22px]">
                {f.t === "sum" && <Svg s={15} h={16}><P d="M14 1H2l6 7-6 7h12" s={W} w={1.300} /></Svg>}
                {f.t === "date" && (
                  <Svg s={16}><rect x=".8" y=".8" width="14.400" height="14.400" rx="2.500" stroke={W} strokeWidth="1.300" /><P d="M1 4.500h14" /><P d="M6.500 8h6.500M3.500 11h6.500" w={1.600} /><path d="M8 7v5M11 7v2M5.500 10v2" stroke="#141414" /></Svg>
                )}
              </div>
              {f.n}
            </div>
          ))}
        </div>
        <div className="h-[555px] w-[10px] bg-[#474747]" />
      </div>
    </div>
  );
}

function Status() {
  return (
    <div className="flex h-[30px] items-center border-t border-[#6a6a6a] bg-[#141414] text-[15px] tracking-[-0.02em] text-[#d8d8d8]">
      <span className="mt-[2px] ml-[5px] w-[1649px]">Page 2 of 2</span>
      <Svg s={8}><P d="M1 4h6" s="#fff" w={1.800} /></Svg>
      <div className="ml-[5px] flex w-[125px] items-center">
        <div className="h-px w-[39px] bg-[#d0d0d0]" />
        <div className="h-[13px] w-[5px] bg-[#d8d8d8]" />
        <div className="h-px w-[18px] bg-[#d0d0d0]" />
        <div className="h-[7px] w-px bg-[#d0d0d0]" />
        <div className="h-px flex-1 bg-[#d0d0d0]" />
      </div>
      <span className="ml-[7px]"><Svg s={11}><P d="M5.500 0v11M0 5.500h11" s="#fff" w={1.700} /></Svg></span>
      <span className="-mt-[2px] ml-[15px] w-[53px]">70%</span>
      <Svg s={19} h={14}><rect x="1" y="1" width="17" height="12" rx="2" stroke="#d8d8d8" strokeWidth="1.500" /><P d="M7 4H4v2m0 2v2h3M12 4h3v2m0 2v2h-3" w={1.500} /></Svg>
    </div>
  );
}

/* ---------- Taskbar ---------- */

function Chrome() {
  return (
    <svg width="30" height="30" viewBox="0 0 30 30">
      <circle cx="15" cy="15" r="15" fill="#fbc116" />
      <path d="M2 7.500A15 15 0 0 1 28 7.500L15 8.500 8.500 18.700z" fill="#e33b2e" />
      <path d="M2 7.500A15 15 0 0 0 14 30L21.500 18.700 15 22 8.500 18.700z" fill="#229342" />
      <circle cx="15" cy="15" r="7" fill="#fff" />
      <circle cx="15" cy="15" r="5.500" fill="#3b78e7" />
    </svg>
  );
}

function Slot({ children, dot }: Kids & { dot?: React.ReactNode }) {
  return (
    <div className="relative flex h-[60px] w-[55.100px] items-center justify-center">
      {children}
      {dot}
    </div>
  );
}

function Taskbar() {
  return (
    <div className="flex h-[60px] items-center bg-[linear-gradient(90deg,#1e2716_0%,#212915_28%,#252527_42%,#27272b_52%,#28251f_62%,#2e241c_70%,#20271a_79%,#1d2517_100%)] text-[14.5px] tracking-[-0.02em] text-white">
      <div className="relative ml-[25px] w-[39px]">
        <Svg s={32} h={44}>
          <path d="M3 21a5 5 0 0 1 1-8 6.500 6.500 0 0 1 12 0v8z" fill="#8db6f5" />
          <path d="M3 27c8 3 14-1 16-8 10 3 11 18-2 19-8 0-12-5-14-11z" fill="#f39a25" />
        </Svg>
        <div className="absolute top-[-1px] left-[14px] flex h-5 w-5 items-center justify-center rounded-full bg-[#ff99a4] text-[13px] text-black">8</div>
      </div>
      <div className="w-[297px] leading-[20px]">
        <div>78°F</div>
        <div className="text-[14.5px] tracking-[0.005em] text-[#c8c8c8]">Mostly clear</div>
      </div>
      <svg width="29" height="29" viewBox="0 0 29 29">
        <defs><linearGradient id="win" x1="0" y1="0" x2="1" y2="1"><stop stopColor="#8be4ff" /><stop offset="1" stopColor="#0f93f0" /></linearGradient></defs>
        <path d="M0 0h14v14H0zM15 0h14v14H15zM0 15h14v14H0zM15 15h14v14H15z" fill="url(#win)" />
      </svg>
      <div className="ml-[16px] flex h-[40px] w-[274px] items-center rounded-full border border-[#4d5248] bg-[#3b4036] pl-[13px] text-[16px] text-[#d5d5d5]">
        <Svg s={20}><circle cx="8.500" cy="8.500" r="7" stroke="#e0e0e0" strokeWidth="2" fill="#5c6058" /><P d="M13.500 13.500l5 5.500" w={2.200} /></Svg>
        <span className="ml-[11px]">Search</span>
        <span className="mr-[2px] ml-auto">
          <svg width="60" height="36" viewBox="0 0 60 36">
            <path d="M2 31c6-4 14-3 22-8 6-4 10-1 14-5 8-3 16-1 21 8l-4 8H6z" fill="#7d9a3a" />
            <path d="M28 20c6-7 20-7 26 1-8-1-16-1-25 5z" fill="#d08a2a" />
            <path d="M4 13l14 1 6-1 12 2 3 3-14 0-12 3-6-1 7-3z" fill="#c9bfe0" />
            <path d="M2 5l9 7 6 3h5l-6-6zM22 9l12-6-6 9z" fill="#a99fc8" />
            <path d="M35 4l3 13" stroke="#ddd" />
            {[[4, 31], [8, 28], [13, 31], [30, 27], [34, 24], [38, 29], [43, 25], [48, 30], [53, 27], [43, 31], [33, 31], [55, 31]].map(([x, y], i) => (
              <circle key={i} cx={x} cy={y} r="2.600" fill="#ffbe0d" />
            ))}
          </svg>
        </span>
      </div>
      <div className="ml-[3px] flex">
        <Slot><Svg s={30} h={28}><rect x="8" y="0" width="22" height="20" rx="1" fill="#eee" /><rect x="0" y="8" width="22" height="20" rx="1" fill="#777" fillOpacity=".85" /><path d="M8 8h14v12H8z" fill="#a8a8a8" /></Svg></Slot>
        <Slot><Svg s={30} h={28}><path d="M0 2q0-2 2-2h8l3 4h15q2 0 2 2v4H0z" fill="#d99a1a" /><rect y="5" width="30" height="22" rx="1.500" fill="#ffcf48" /><path d="M5 27v-5q0-3 3-3h14q3 0 3 3v5z" fill="#1277c8" /><path d="M10 23h10" stroke="#0a4f8c" strokeWidth="1.500" /></Svg></Slot>
        <Slot dot={<div className="absolute bottom-[6px] h-[4px] w-[8px] rounded-full bg-[#9a9a9a]" />}>
          <Chrome />
          <svg width="20" height="20" viewBox="0 0 20 20" className="absolute top-[9px] left-[29px]"><circle cx="10" cy="10" r="10" fill="#cf9a80" /><circle cx="10" cy="4" r="2.300" fill="#4a2f25" /><path d="M6 7h8l-1 12H7z" fill="#22252c" /></svg>
        </Slot>
        <Slot>
          <Chrome />
          <div className="absolute top-[15px] left-[28px] flex h-[15px] w-[15px] items-center justify-center rounded-full bg-[#b9330f] text-[10px]">R</div>
        </Slot>
        <Slot><div className="flex h-[26px] w-[26px] items-center justify-center rounded-[2px] bg-[#0a66c2]"><FaLinkedinIn size={20} /></div></Slot>
        <Slot><div className="h-[23px] w-[28px] border border-t-2 border-[#aaa] bg-black pl-[2px] text-[7px] leading-[8px] text-white">c:\_</div></Slot>
        <Slot><Svg s={30}><path d="M22 0L3 19l-3-2.500v-3L3 11l2-.5L22 23z" fill="none" /><path d="M3.500 8L22 22v8L.8 12q-.8-1 0-2z" fill="#2489ca" /><path d="M3.500 22L22 8V0L.8 18q-.8 1 0 2z" fill="#1070b3" /><path d="M21 0l8 3.500q1 .5 1 1.500v20q0 1-1 1.500L21 30q1-1 1-2V2q0-1-1-2z" fill="#3ba9f5" /></Svg></Slot>
        <Slot><div className="flex h-[27px] w-[27px] items-center justify-center rounded-full bg-[#2aa1dd] pr-[2px]"><FaTelegramPlane size={16} /></div></Slot>
        <Slot>
          <FaWhatsapp size={33} color="#25d366" />
          <div className="absolute top-[6px] left-[26px] flex h-[26px] w-[26px] items-center justify-center rounded-full bg-[#4cc2ff] text-[14px] text-black">34</div>
        </Slot>
        <Slot>
          <div className="flex h-[30px] w-[30px] items-center justify-center rounded-full border-2 border-white bg-[#0095d9] text-[24px] font-bold leading-none">?</div>
          <div className="absolute top-[9px] left-[29px] h-[20px] w-[20px] rounded-full bg-[#ffb90a]" />
        </Slot>
        <Slot><div className="flex h-[28px] w-[28px] items-center justify-center rounded-[3px] bg-[#2b6288]"><svg width="26" height="26" viewBox="0 0 26 26" fill="none"><path d="M4 21C3 14 1 6 5 4c5-1 10 4 12 9 1 4 4 4 5 7l-3 1 3 3M5 10l4 8 2-4c3 2 4 6 8 8" stroke="#d8e6ef" strokeWidth="1.200" /><path d="M19 2l4 4M21 1l3 5" stroke="#fff" strokeWidth="1.800" /></svg></div></Slot>
        <Slot><div className="flex h-[28px] w-[28px] items-center justify-center rounded-full bg-[#f6f6f6]"><Svg s={10} h={22}><path d="M5 0c5 6 6 13 0 19-6-6-5-13 0-19z" fill="#10934f" /><path d="M5 0c5 6 6 13 0 19v3z" fill="#0a6b45" /></Svg></div></Slot>
        <Slot><div className="flex h-[30px] w-[30px] items-center justify-center rounded-full bg-[#ff6c37]"><Svg s={20}><path d="M2 18l5-6-1-2 6-5 4 2-5 6-3 1z" fill="#fff" /><circle cx="16.500" cy="3.500" r="2.600" fill="#fff" /></Svg></div></Slot>
        <Slot><Svg s={30} h={28}><rect x="7" width="23" height="28" rx="1.500" fill="#21a366" /><path d="M18 0h12v7H18z" fill="#33c481" /><path d="M7 14h11v14H7zM18 14h12v7H18z" fill="#107c41" /><path d="M7 21h23v7H7z" fill="#185c37" /><rect y="6" width="16" height="16" rx="1.500" fill="#107c41" /><path d="M5 10l6 8M11 10l-6 8" stroke="#fff" strokeWidth="2" /></Svg></Slot>
        <Slot dot={<div className="absolute bottom-[6px] h-[4px] w-[20px] rounded-full bg-[#4cc2ff]" />}>
          <div className="flex h-[50px] w-[50px] items-center justify-center rounded-[5px] border border-[#3d4138] bg-[#33372f]">
            <Svg s={24} h={30}><rect x="13" width="11" height="30" rx="1" fill="#e0a010" /><path d="M18 10h6v20h-6z" fill="#c98410" /><rect x="6.500" y="7" width="11" height="23" rx="1" fill="#f0c52e" /><rect y="15" width="11" height="15" rx="1" fill="#f8e06a" /></Svg>
          </div>
        </Slot>
      </div>
      <div className="ml-auto flex items-center pr-[25px]">
        <Svg s={15} h={9}><P d="M1 8l6.500-6.500L14 8" s="#fff" w={1.700} /></Svg>
        <div className="mt-[4px] ml-[22px]"><Svg s={22} h={18}><path d="M5 13a5 5 0 0 1 0-9 6 6 0 0 1 11 0 4 4 0 0 1 1 9z" fill="#b5b5b5" /><path d="M0 8q5-4 12 5H4q-4-1-4-5z" fill="#e0e0e0" /><circle cx="15" cy="12" r="5.500" fill="#8a8a8a" /><path d="M13.500 9.500v5M16.500 9.500v5" stroke="#fff" /></Svg></div>
        <div className="ml-[18px] w-[36px] text-center leading-[20px] tracking-[-0.03em]">ENG<br />IN</div>
        <div className="ml-[19px]"><Svg s={20} h={17}><P d="M1 6.500q9-8.500 18 0M4 9.500q6-5.500 12 0M7 12.500q3-2.500 6 0" s="#fff" w={1.500} /><circle cx="10" cy="15" r="1.800" fill="#fff" /></Svg></div>
        <div className="ml-[10px]"><Svg s={21} h={18}><P d="M1 6.500v5h3.500L9 16V2L4.500 6.500zM12 6q2 3 0 6M14.500 4q4 5 0 10M17 2q5.500 7 0 14" s="#fff" w={1.300} /></Svg></div>
        <div className="ml-[9px]"><Svg s={21} h={14}><rect x="1" y="1" width="16" height="12" rx="2.500" stroke="#fff" strokeWidth="1.400" /><rect x="3" y="3" width="6.500" height="8" fill="#fff" /><path d="M19 5v4" stroke="#fff" strokeWidth="2" /></Svg></div>
        <div className="ml-[14px] w-[74px] text-right leading-[20px] tracking-[-0.01em] whitespace-nowrap">
          <div className="-ml-2">9:03 PM</div>
          <div className="-ml-2">2/25/2025</div>
        </div>
      </div>
    </div>
  );
}

export default function App() {
  return (
    <div className="flex h-[1080px] w-[1920px] flex-col overflow-hidden bg-[#141414] font-['Open_Sans','Noto_Sans',sans-serif]">
      <TitleBar />
      <Menu />
      <Ribbon />
      <div className="flex h-[777px]">
        <Rail />
        <div className="flex w-[1417px] flex-col">
          <div className="flex h-[733px]">
            <Canvas />
            <Filters />
          </div>
          <PageTabs />
        </div>
        <Visualizations />
        <DataPane />
      </div>
      <Status />
      <div className="-mt-px flex h-px bg-black">
        <div className="w-[1034px] bg-[#e4e4e4]" />
      </div>
      <Taskbar />
    </div>
  );
}
